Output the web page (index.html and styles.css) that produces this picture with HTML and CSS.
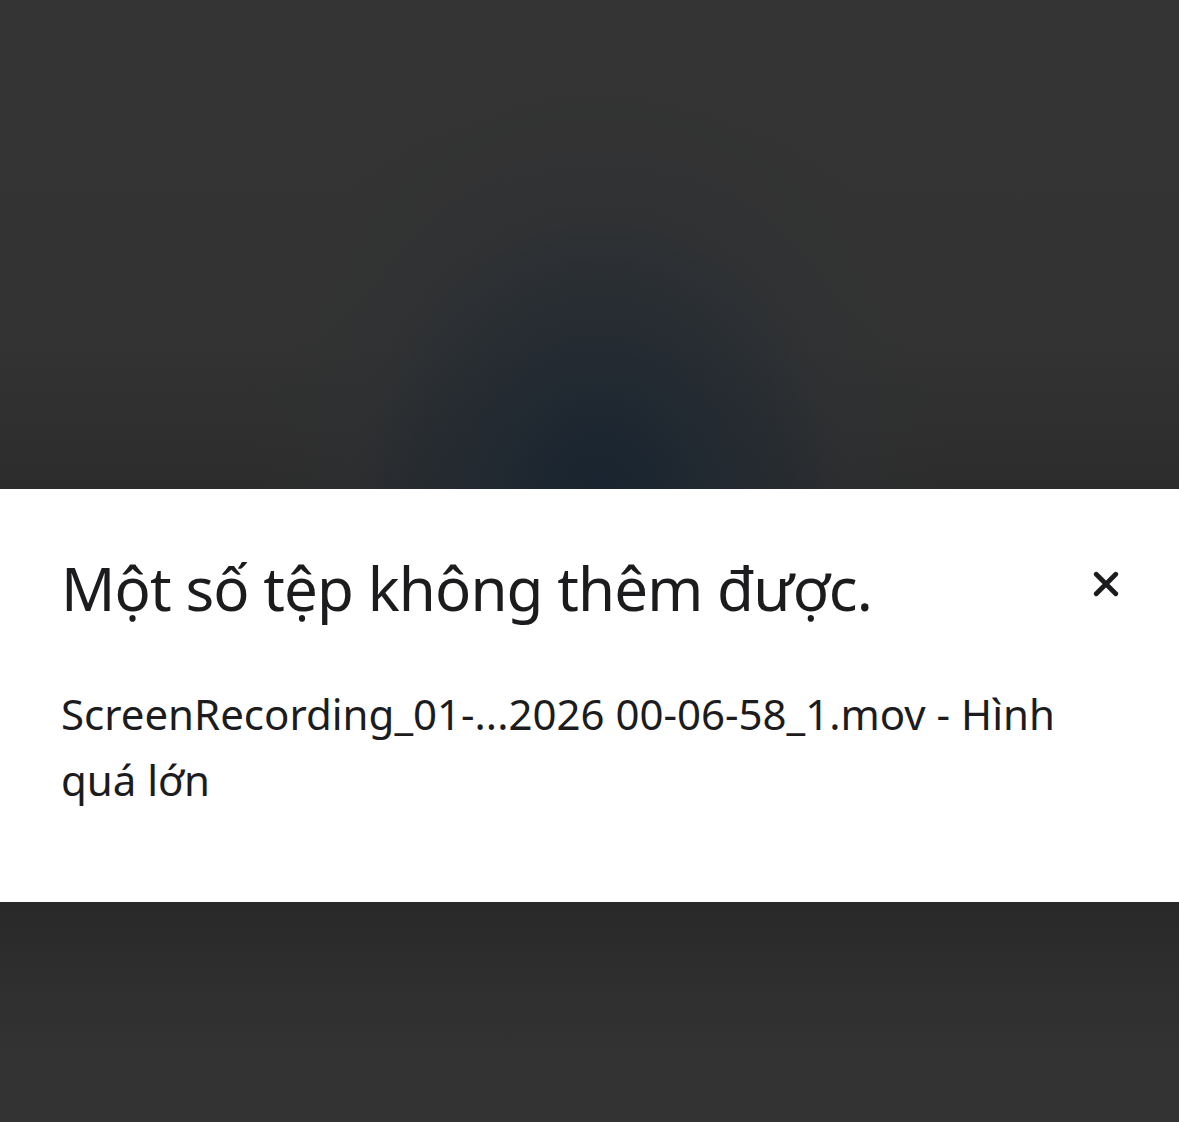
FILE: index.html
```html
<!DOCTYPE html>
<html lang="vi">
<head>
<meta charset="utf-8">
<link rel="stylesheet" href="styles.css">
</head>
<body>
<div class="backdrop top"></div>
<section class="sheet">
  <div class="sheet-head">
    <h1 class="title">Một số tệp không thêm được.</h1>
    <button class="close" aria-label="Đóng">
      <svg viewBox="0 0 24 24" width="26" height="26"><path d="M3 3 L21 21 M21 3 L3 21" stroke="#1c1c1e" stroke-width="4.4" stroke-linecap="round" fill="none"/></svg>
    </button>
  </div>
  <p class="message">ScreenRecording_01-...2026 00-06-58_1.mov - Hình quá lớn</p>
</section>
<div class="backdrop bottom"></div>
</body>
</html>
```
FILE: styles.css
```css
html, body {
  margin: 0;
  padding: 0;
}
body {
  width: 1179px;
  height: 1122px;
  overflow: hidden;
  display: flex;
  flex-direction: column;
  background: #333333;
  font-family: "Noto Sans", "Open Sans", sans-serif;
}
.backdrop.top {
  height: 489px;
  flex: none;
  background:
    radial-gradient(ellipse 360px 440px at 600px 500px, rgba(24,36,48,1) 0%, rgba(30,40,50,0.7) 35%, rgba(45,48,52,0.3) 70%, rgba(51,51,51,0) 100%),
    linear-gradient(to bottom, #343434 0%, #333333 70%, #2c2c2c 100%);
}
.backdrop.bottom {
  flex: 1;
  background: linear-gradient(to bottom, #292929 0%, #2e2e2e 35%, #333333 70%, #333333 100%);
}
.sheet {
  height: 413px;
  flex: none;
  background: #ffffff;
  box-sizing: border-box;
  padding: 59px 60px 0 61px;
  color: #1c1c1e;
}
.sheet-head {
  display: flex;
  justify-content: space-between;
  align-items: flex-start;
}
.title {
  margin: 0;
  font-weight: 400;
  font-size: 60px;
  line-height: 80px;
  letter-spacing: -0.9px;
}
.close {
  border: 0;
  background: none;
  padding: 0;
  margin-top: 23px;
  width: 26px;
  height: 26px;
}
.close svg { display: block; }
.message {
  margin: 53px 0 0;
  font-size: 42px;
  line-height: 66px;
  letter-spacing: 0px;
  max-width: 1010px;
}
```
